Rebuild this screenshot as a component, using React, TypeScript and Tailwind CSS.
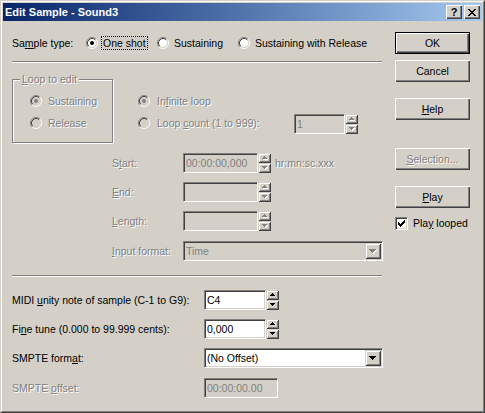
import React from "react";

const DIS = "text-[#808080] [text-shadow:1px_1px_0_#ffffff]";
const RAISED =
  "shadow-[inset_1px_1px_0_#ffffff,inset_-1px_-1px_0_#404040,inset_-2px_-2px_0_#808080]";
const EDGE_RAISED =
  "shadow-[inset_1px_1px_0_#d4d0c8,inset_-1px_-1px_0_#404040,inset_2px_2px_0_#ffffff,inset_-2px_-2px_0_#808080]";
const SUNK_OUT =
  "border border-t-[#808080] border-l-[#808080] border-r-white border-b-white";
const SUNK_IN = "shadow-[inset_1px_1px_0_#404040,inset_-1px_-1px_0_#d4d0c8]";

function U({ children }: { children: React.ReactNode }) {
  return <span className="underline underline-offset-[1px]">{children}</span>;
}

function Radio({ checked, disabled }: { checked?: boolean; disabled?: boolean }) {
  return (
    <svg width="12" height="12" viewBox="0 0 12 12" className="shrink-0">
      <circle cx="6" cy="6" r="4.5" fill={disabled ? "#d4d0c8" : "#ffffff"} />
      <path d="M2.11 9.89A5.5 5.5 0 0 1 9.89 2.11" stroke="#808080" fill="none" />
      <path d="M9.89 2.11A5.5 5.5 0 0 1 2.11 9.89" stroke="#ffffff" fill="none" />
      <path d="M2.82 9.18A4.5 4.5 0 0 1 9.18 2.82" stroke="#404040" fill="none" />
      <path d="M9.18 2.82A4.5 4.5 0 0 1 2.82 9.18" stroke="#d4d0c8" fill="none" />
      {checked && <circle cx="6" cy="6" r="2" fill={disabled ? "#808080" : "#000000"} />}
    </svg>
  );
}

function UpArrow({ color }: { color: string }) {
  return <path d="M2 0h1v1H2z M1 1h3v1H1z M0 2h5v1H0z" fill={color} />;
}
function DownArrow({ color }: { color: string }) {
  return <path d="M0 0h5v1H0z M1 1h3v1H1z M2 2h1v1H2z" fill={color} />;
}

function SpinHalf({ up, disabled }: { up?: boolean; disabled?: boolean }) {
  return (
    <div className={`h-[10px] w-full flex items-center justify-center ${EDGE_RAISED}`}>
      <svg width="6" height="4" viewBox="0 0 6 4" shapeRendering="crispEdges">
        {disabled && (
          <g transform="translate(1,1)">
            {up ? <UpArrow color="#ffffff" /> : <DownArrow color="#ffffff" />}
          </g>
        )}
        {up ? (
          <UpArrow color={disabled ? "#808080" : "#000000"} />
        ) : (
          <DownArrow color={disabled ? "#808080" : "#000000"} />
        )}
      </svg>
    </div>
  );
}

function Spin({ disabled }: { disabled?: boolean }) {
  return (
    <div className="w-[13px] h-[20px] flex flex-col shrink-0">
      <SpinHalf up disabled={disabled} />
      <SpinHalf disabled={disabled} />
    </div>
  );
}

function Field({
  w,
  value,
  disabled,
}: {
  w: string;
  value?: string;
  disabled?: boolean;
}) {
  return (
    <div className={`h-[20px] ${w} ${SUNK_OUT} shrink-0`}>
      <div
        className={`h-full w-full ${SUNK_IN} ${
          disabled ? "bg-[#d4d0c8] text-[#808080]" : "bg-white text-black"
        } flex items-center pl-[2px] whitespace-nowrap overflow-hidden`}
      >
        {value}
      </div>
    </div>
  );
}

function Combo({ w, value, disabled }: { w: string; value: string; disabled?: boolean }) {
  const c = disabled ? "#808080" : "#000000";
  return (
    <div className={`h-[20px] ${w} ${SUNK_OUT} shrink-0`}>
      <div
        className={`h-full w-full ${SUNK_IN} ${
          disabled ? "bg-[#d4d0c8] text-[#808080]" : "bg-white text-black"
        } flex p-[1px]`}
      >
        <div className="flex-1 flex items-center pl-[1px] whitespace-nowrap">{value}</div>
        <div className={`w-[16px] h-full bg-[#d4d0c8] flex items-center justify-center ${EDGE_RAISED}`}>
          <svg width="8" height="5" viewBox="0 0 8 5" shapeRendering="crispEdges">
            {disabled && (
              <path
                transform="translate(1,1)"
                d="M0 0h7v1H0z M1 1h5v1H1z M2 2h3v1H2z M3 3h1v1H3z"
                fill="#ffffff"
              />
            )}
            <path d="M0 0h7v1H0z M1 1h5v1H1z M2 2h3v1H2z M3 3h1v1H3z" fill={c} />
          </svg>
        </div>
      </div>
    </div>
  );
}

function Btn({
  children,
  def,
  disabled,
}: {
  children: React.ReactNode;
  def?: boolean;
  disabled?: boolean;
}) {
  return (
    <div className={`h-[22px] w-[75px] ${def ? "border border-black" : ""}`}>
      <div
        className={`w-full h-full flex items-center justify-center ${RAISED} ${
          disabled ? DIS : "text-black"
        }`}
      >
        {children}
      </div>
    </div>
  );
}

function TitleBtn({ children }: { children: React.ReactNode }) {
  return (
    <div
      className={`w-[16px] h-[14px] bg-[#d4d0c8] flex items-center justify-center ${RAISED}`}
    >
      {children}
    </div>
  );
}

function Sep() {
  return <div className="w-[370px] h-[2px] border-t border-t-[#808080] border-b border-b-white" />;
}

export default function App() {
  return (
    <div className="w-[485px] h-[413px] bg-[#d4d0c8] border border-t-[#d4d0c8] border-l-[#d4d0c8] border-r-[#404040] border-b-[#404040] font-['Liberation_Sans',Arial,sans-serif] text-[10.5px] leading-[13px] text-black select-none">
      <div className="w-full h-full border border-t-white border-l-white border-r-[#808080] border-b-[#808080] p-[1px] flex flex-col">
        {/* Title bar */}
        <div className="h-[18px] shrink-0 bg-linear-to-r from-[#0a246a] to-[#a6caf0] flex items-center pl-[2px] pr-[2px]">
          <span className="flex-1 text-white font-bold text-[11px] whitespace-nowrap">
            Edit Sample - Sound3
          </span>
          <TitleBtn>
            <span className="font-bold text-[11px] leading-[11px] text-black">?</span>
          </TitleBtn>
          <div className="w-[2px]" />
          <TitleBtn>
            <svg width="8" height="7" viewBox="0 0 8 7" shapeRendering="crispEdges">
              <path
                d="M0 0h2v1H0z M6 0h2v1H6z M1 1h2v1H1z M5 1h2v1H5z M2 2h4v1H2z M3 3h2v1H3z M2 4h4v1H2z M1 5h2v1H1z M5 5h2v1H5z M0 6h2v1H0z M6 6h2v1H6z"
                fill="#000000"
              />
            </svg>
          </TitleBtn>
        </div>

        {/* Client */}
        <div className="flex-1 flex pl-[9px]">
          {/* Left column */}
          <div className="w-[372px] flex flex-col">
            <div className="mt-[12px] h-[20px] flex items-center">
              <span className="w-[74px] whitespace-nowrap">
                Sa<U>m</U>ple type:
              </span>
              <div className="w-[71px] flex items-center">
                <Radio checked />
                <span className="ml-[3px] border border-dotted border-black px-[1px] leading-[12px] whitespace-nowrap">
                  One shot
                </span>
              </div>
              <div className="w-[81px] flex items-center">
                <Radio />
                <span className="ml-[5px] whitespace-nowrap">Sustaining</span>
              </div>
              <div className="flex items-center">
                <Radio />
                <span className="ml-[5px] whitespace-nowrap">Sustaining with Release</span>
              </div>
            </div>

            <div className="mt-[8px]">
              <Sep />
            </div>

            <div className="mt-[16px] flex">
              <div className="relative w-[101px] h-[64px] border border-[#808080] shadow-[inset_1px_1px_0_#ffffff,1px_1px_0_#ffffff]">
                <span className={`absolute left-[7px] top-[-7px] px-[2px] bg-[#d4d0c8] whitespace-nowrap ${DIS}`}>
                  <U>L</U>oop to edit
                </span>
                <div className="pt-[11px] pl-[17px] flex flex-col gap-[2px]">
                  <div className="h-[20px] flex items-center">
                    <Radio checked disabled />
                    <span className={`ml-[6px] ${DIS}`}>Sustaining</span>
                  </div>
                  <div className="h-[20px] flex items-center">
                    <Radio disabled />
                    <span className={`ml-[6px] ${DIS}`}>Release</span>
                  </div>
                </div>
              </div>
              <div className="ml-[25px] pt-[12px] flex flex-col gap-[2px]">
                <div className="h-[20px] flex items-center">
                  <Radio checked disabled />
                  <span className={`ml-[7px] whitespace-nowrap ${DIS}`}>
                    In<U>f</U>inite loop
                  </span>
                </div>
                <div className="h-[20px] flex items-center">
                  <Radio disabled />
                  <span className={`ml-[7px] w-[137px] whitespace-nowrap ${DIS}`}>
                    Loop <U>c</U>ount (1 to 999):
                  </span>
                  <div className="flex mt-[2px]">
                    <Field w="w-[51px]" value="1" disabled />
                    <Spin disabled />
                  </div>
                </div>
              </div>
            </div>

            <div className="mt-[10px] h-[20px] flex items-center">
              <span className={`pl-[100px] w-[171px] shrink-0 ${DIS}`}>
                S<U>t</U>art:
              </span>
              <Field w="w-[75px]" value="00:00:00,000" disabled />
              <Spin disabled />
              <span className={`ml-[4px] whitespace-nowrap ${DIS}`}>hr:mn:sc.xxx</span>
            </div>
            <div className="mt-[9px] h-[20px] flex items-center">
              <span className={`pl-[100px] w-[171px] shrink-0 ${DIS}`}>
                <U>E</U>nd:
              </span>
              <Field w="w-[75px]" disabled />
              <Spin disabled />
            </div>
            <div className="mt-[9px] h-[20px] flex items-center">
              <span className={`pl-[100px] w-[171px] shrink-0 ${DIS}`}>
                <U>L</U>ength:
              </span>
              <Field w="w-[75px]" disabled />
              <Spin disabled />
            </div>
            <div className="mt-[10px] h-[20px] flex items-center">
              <span className={`pl-[100px] w-[171px] shrink-0 whitespace-nowrap ${DIS}`}>
                <U>I</U>nput format:
              </span>
              <Combo w="w-[200px]" value="Time" disabled />
            </div>

            <div className="mt-[14px]">
              <Sep />
            </div>

            <div className="mt-[13px] h-[20px] flex items-center">
              <span className="w-[192px] shrink-0 whitespace-nowrap">
                MIDI <U>u</U>nity note of sample (C-1 to G9):
              </span>
              <Field w="w-[62px]" value="C4" />
              <Spin />
            </div>
            <div className="mt-[9px] h-[20px] flex items-center">
              <span className="w-[192px] shrink-0 whitespace-nowrap">
                Fi<U>n</U>e tune (0.000 to 99.999 cents):
              </span>
              <Field w="w-[62px]" value="0,000" />
              <Spin />
            </div>
            <div className="mt-[9px] h-[20px] flex items-center">
              <span className="w-[192px] shrink-0 whitespace-nowrap">
                SMPTE form<U>a</U>t:
              </span>
              <Combo w="w-[179px]" value="(No Offset)" />
            </div>
            <div className="mt-[10px] h-[20px] flex items-center">
              <span className={`w-[192px] shrink-0 whitespace-nowrap ${DIS}`}>
                SMPTE <U>o</U>ffset:
              </span>
              <Field w="w-[74px]" value="00:00:00.00" disabled />
            </div>
          </div>

          {/* Right column */}
          <div className="ml-[11px] w-[75px] flex flex-col">
            <div className="mt-[11px]">
              <Btn def>OK</Btn>
            </div>
            <div className="mt-[6px]">
              <Btn>Cancel</Btn>
            </div>
            <div className="mt-[16px]">
              <Btn>
                <U>H</U>elp
              </Btn>
            </div>
            <div className="mt-[28px]">
              <Btn disabled>
                <U>S</U>election...
              </Btn>
            </div>
            <div className="mt-[16px]">
              <Btn>
                <U>P</U>lay
              </Btn>
            </div>
            <div className="mt-[9px] h-[13px] flex items-center">
              <div className={`w-[13px] h-[13px] shrink-0 ${SUNK_OUT}`}>
                <div className={`w-full h-full bg-white ${SUNK_IN} flex items-center justify-center`}>
                  <svg width="7" height="7" viewBox="0 0 7 7" shapeRendering="crispEdges">
                    <path
                      d="M6 0h1v1H6z M5 1h2v1H5z M0 2h1v1H0z M4 2h3v1H4z M0 3h2v1H0z M3 3h3v1H3z M0 4h5v1H0z M1 5h3v1H1z M2 6h1v1H2z"
                      fill="#000000"
                    />
                  </svg>
                </div>
              </div>
              <span className="ml-[5px] whitespace-nowrap">
                Pla<U>y</U> looped
              </span>
            </div>
          </div>
        </div>
      </div>
    </div>
  );
}
